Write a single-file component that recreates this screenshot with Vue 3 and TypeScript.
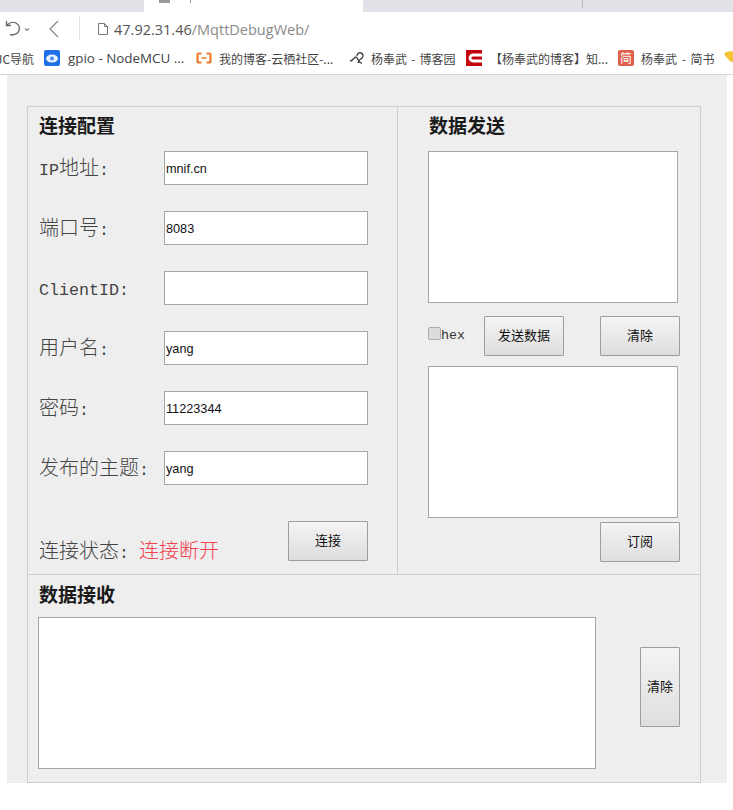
<script setup lang="ts">
const rows = [
  { label: "IP地址:", value: "mnif.cn" },
  { label: "端口号:", value: "8083" },
  { label: "ClientID:", value: "" },
  { label: "用户名:", value: "yang" },
  { label: "密码:", value: "11223344" },
  { label: "发布的主题:", value: "yang" },
];

// CJK glyphs are full-width, Latin ones half-width, as in the original bitmap font.
function parts(label: string) {
  return label.split(/([\x00-\x7f]+)/).filter(Boolean).map((text) => ({
    text,
    latin: /^[\x00-\x7f]/.test(text),
  }));
}
</script>

<template>
  <div class="page">
    <div class="tabs">
      <div class="tab-left"></div>
      <div class="tab-active"><i class="tab-ico"></i><i class="tab-dot"></i></div>
      <div class="tab-rest"><i class="tab-sep"></i></div>
    </div>
    <div class="toolbar">
      <svg class="ic-undo" width="26" height="18" viewBox="0 0 26 18">
        <path d="M1.500 1v4.500H6M1.500 5.500C4 2.500 8 1.500 11 3c3 1.700 4 5 2.800 8-1.200 3-4.300 4-8.800 4" fill="none" stroke="#666" stroke-width="1.300" />
        <path d="M20 8.500l2 2 2-2" fill="none" stroke="#888" stroke-width="1.100" />
      </svg>
      <svg class="ic-back" width="12" height="18" viewBox="0 0 12 18">
        <path d="M10 1 2 9l8 8" fill="none" stroke="#888" stroke-width="1.200" />
      </svg>
      <span class="tool-sep"></span>
      <svg class="ic-doc" width="10" height="12" viewBox="0 0 10 12">
        <path d="M.5.500h6l3 3v8h-9zM6.500.500v3h3" fill="none" stroke="#777" />
      </svg>
      <span class="url"><b>47.92.31.46</b>/MqttDebugWeb/</span>
    </div>
    <div class="bookmarks">
      <span class="bm bm-first">JC导航</span>
      <svg class="fav" width="16" height="16" viewBox="0 0 16 16">
        <rect width="16" height="16" rx="2" fill="#1f6fe8" />
        <ellipse cx="8" cy="8.500" rx="6" ry="4" fill="#e6f0ff" />
        <circle cx="8" cy="8.500" r="2" fill="#4a8cf0" />
      </svg>
      <span class="bm bm-gpio">gpio - NodeMCU ...</span>
      <svg class="fav" width="16" height="16" viewBox="0 0 16 16">
        <path d="M5.500 3.500H3Q1.500 3.500 1.500 5v6Q1.500 12.500 3 12.500h2.500M10.500 3.500H13q1.500 0 1.500 1.500v6q0 1.500-1.500 1.500h-2.500" fill="none" stroke="#ee7a2c" stroke-width="2.200" />
        <path d="M5.500 8h5" stroke="#ee7a2c" stroke-width="1.500" />
      </svg>
      <span class="bm bm-yq">我的博客-云栖社区-...</span>
      <svg class="fav" width="16" height="16" viewBox="0 0 16 16">
        <path d="M1 11c3 0 4-4 6-4s2 6 6 6M8 6a3 3 0 1 1 5 2c-2 2-3 1-4 5" fill="none" stroke="#444" stroke-width="1.400" />
      </svg>
      <span class="bm bm-cn">杨奉武 - 博客园</span>
      <svg class="fav" width="16" height="16" viewBox="0 0 16 16">
        <rect width="16" height="16" fill="#c4070f" />
        <path d="M16 5H7a3 3 0 0 0 0 6h9" fill="none" stroke="#fff" stroke-width="2.800" />
      </svg>
      <span class="bm bm-zh">【杨奉武的博客】知...</span>
      <span class="fav-js">简</span>
      <span class="bm bm-js">杨奉武 - 简书</span>
      <svg class="fav" width="16" height="16" viewBox="0 0 16 16">
        <path d="M1 4c4-4 10-3 14 0v5c-2 3-5 4-8 2C5 9 3 7 1 4z" fill="#f6c12e" />
      </svg>
    </div>

    <div class="sheet">
      <div class="panel">
        <div class="top">
          <section class="config">
            <h2 class="title">连接配置</h2>
            <div v-for="r in rows" :key="r.label" class="row">
              <label class="lbl"><span v-for="(p, i) in parts(r.label)" :key="i" :class="{ latin: p.latin }">{{ p.text }}</span></label>
              <input class="field" type="text" :value="r.value" />
            </div>
            <div class="status-row">
              <span class="lbl status">连接状态<span class="latin">: </span><em>连接断开</em></span>
              <button class="btn btn-main" type="button">连接</button>
            </div>
          </section>
          <section class="send">
            <h2 class="title title-send">数据发送</h2>
            <textarea class="area area-send"></textarea>
            <div class="send-tools">
              <label class="hex"><input class="chk" type="checkbox" /><span>hex</span></label>
              <button class="btn btn-main" type="button">发送数据</button>
              <button class="btn btn-main btn-clear" type="button">清除</button>
            </div>
            <textarea class="area area-send"></textarea>
            <button class="btn btn-main btn-sub" type="button">订阅</button>
          </section>
        </div>
        <section class="recv">
          <h2 class="title">数据接收</h2>
          <div class="recv-body">
            <textarea class="area area-recv"></textarea>
            <button class="btn btn-tall" type="button">清除</button>
          </div>
        </section>
      </div>
    </div>
  </div>
</template>

<style>
html, body { background: #fff; margin: 0; }
</style>

<style scoped>
.page {
  width: 733px;
  height: 810px;
  overflow: hidden;
  font-family: "Noto Sans CJK SC", "Liberation Sans", sans-serif;
}
.tabs { display: flex; height: 12px; background: #e1e1e8; }
.tab-left { width: 144px; }
.tab-active { width: 219px; background: #fff; display: flex; gap: 20px; padding-left: 15px; box-sizing: border-box; }
.tab-ico { width: 11px; height: 3px; background: #999; }
.tab-dot { width: 1px; height: 3px; background: #999; }
.tab-rest { flex: 1; padding-left: 219px; }
.tab-sep { display: block; width: 1px; height: 8px; background: #bbb; }
.toolbar { height: 32px; display: flex; align-items: center; background: #fff; }
.ic-undo { margin-left: 5px; margin-top: 2px; }
.ic-back { margin-left: 17px; margin-top: 2px; }
.tool-sep { width: 1px; height: 24px; background: #e4e4e4; margin-left: 19px; }
.ic-doc { margin-left: 18px; margin-top: 2px; }
.url { margin-left: 6px; font: 14.5px "Open Sans", "Liberation Sans", sans-serif; color: #8a8a8a; white-space: nowrap; margin-top: 2px; }
.url b { font-weight: 400; color: #555; }
.bookmarks {
  height: 31px;
  box-sizing: border-box;
  border-bottom: 1px solid #d4d4d4;
  display: flex;
  align-items: center;
  overflow: hidden;
  background: #fff;
  padding-bottom: 2px;
}
.bm { font: 12px "Noto Sans CJK SC", sans-serif; color: #444; white-space: nowrap; flex: none; }
.fav { flex: none; }
.bm-first { margin-left: -4px; width: 48px; }
.bm-gpio { margin-left: 8px; width: 128px; font: 13.400px "Open Sans", "Noto Sans CJK SC", sans-serif; }
.bm-yq { margin-left: 7px; width: 130px; }
.bm-cn { margin-left: 6px; width: 95px; word-spacing: 1.500px; }
.bm-zh { margin-left: 8px; width: 128px; }
.fav-js {
  width: 16px; height: 16px; flex: none; background: #e0604d; color: #fff; border-radius: 2px;
  font: 12px/16px "Noto Sans CJK SC", sans-serif; text-align: center;
}
.bm-js { margin-left: 7px; width: 82px; word-spacing: 2px; }
.sheet {
  margin: 0 6px 0 7px;
  height: 708px;
  box-sizing: border-box;
  background: #eeeeee;
  padding: 31px 26px 0 20px;
}
.panel {
  height: 677px;
  box-sizing: border-box;
  border: 1px solid #cfcfcf;
  display: flex;
  flex-direction: column;
}
.top { display: flex; height: 467px; border-bottom: 1px solid #cfcfcf; }
.config {
  width: 370px;
  box-sizing: border-box;
  border-right: 1px solid #cfcfcf;
  padding: 8px 29px 0 11px;
  display: flex;
  flex-direction: column;
}
.title {
  margin: 0;
  font: 700 19px/20px "Noto Sans CJK SC", sans-serif;
  color: #1a1a1a;
}
.row { display: flex; align-items: center; justify-content: space-between; height: 34px; margin-bottom: 26px; }
.row:first-of-type { margin-top: 16px; }
.row .lbl { margin-top: 2px; }
.lbl { font: 300 20px/24px "Noto Sans CJK SC", sans-serif; color: #444; white-space: pre; }
.latin { font-family: "Liberation Mono", monospace; font-size: 16.670px; font-weight: 400; }
.field {
  width: 204px;
  height: 34px;
  box-sizing: border-box;
  border: 1px solid #a6a6a6;
  background: #fff;
  padding: 2px 1px 0;
  font: 12.700px "Liberation Sans", sans-serif;
  color: #111;
  outline: none;
}
.status-row { display: flex; justify-content: space-between; align-items: flex-end; margin-top: 10px; }
.status { margin-bottom: -5px; }
.status em { font-style: normal; color: #f0414f; }
.btn {
  box-sizing: border-box;
  border: 1px solid #9e9e9e;
  border-radius: 1px;
  background: linear-gradient(#f4f4f4, #dedede);
  font: 13px "Noto Sans CJK SC", sans-serif;
  color: #111;
  padding: 0 0 3px;
}
.btn-main { width: 80px; height: 40px; flex: none; }
.send { flex: 1; padding: 8px 0 0 30px; display: flex; flex-direction: column; align-items: flex-start; }
.title-send { margin-left: 1px; }
.area {
  display: block;
  box-sizing: border-box;
  border: 1px solid #a6a6a6;
  background: #fff;
  resize: none;
  outline: none;
  margin: 0;
}
.area-send { width: 250px; height: 152px; }
.send > .area:first-of-type { margin-top: 16px; }
.send-tools { display: flex; align-items: flex-start; height: 40px; margin: 13px 0 10px; }
.hex { width: 56px; display: flex; align-items: flex-start; font: 13.330px/16px "Liberation Mono", monospace; color: #333; margin-top: 11px; }
.hex span { margin-top: 1px; }
.chk {
  appearance: none;
  width: 13px;
  height: 13px;
  margin: 0;
  box-sizing: border-box;
  border: 1px solid #ababab;
  border-radius: 2px;
  background: #dcdcdc;
}
.btn-clear { margin-left: 36px; }
.btn-sub { margin: 4px 0 0 172px; }
.recv { padding: 9px 0 0 11px; }
.recv-body { display: flex; align-items: flex-start; margin-top: 13px; }
.area-recv { width: 558px; height: 152px; margin-left: -1px; }
.btn-tall { width: 40px; height: 80px; margin: 30px 0 0 44px; }
</style>
